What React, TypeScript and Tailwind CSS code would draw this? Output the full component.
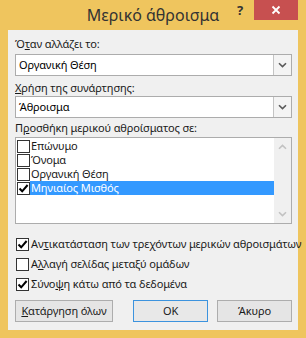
import React from "react";

function Chevron({ up = false, color = "#5a5a5a" }: { up?: boolean; color?: string }) {
  return (
    <svg width="9" height="6" viewBox="0 0 9 6" className={up ? "rotate-180" : ""}>
      <path d="M1 1.2 L4.5 4.6 L8 1.2" fill="none" stroke={color} strokeWidth="1.6" />
    </svg>
  );
}

function Check({ checked }: { checked: boolean }) {
  return (
    <div className="w-[13px] h-[13px] border border-[#333] bg-white flex items-center justify-center shrink-0">
      {checked && (
        <svg width="11" height="11" viewBox="0 0 11 11">
          <path d="M1.5 5.5 L4.2 8.3 L9.6 2" fill="none" stroke="#000" strokeWidth="2" />
        </svg>
      )}
    </div>
  );
}

function Combo({ value }: { value: string }) {
  return (
    <div className="h-[22px] w-[277px] border border-[#acacac] bg-white flex items-stretch">
      <div className="flex-1 flex items-center pl-[3px] text-black">{value}</div>
      <div className="w-[18px] border-l border-[#c4c4c4] bg-[#f4f4f4] flex items-center justify-center">
        <Chevron />
      </div>
    </div>
  );
}

const fields = ["Επώνυμο", "Όνομα", "Οργανική Θέση", "Μηνιαίος Μισθός"];

export default function App() {
  return (
    <div className="w-[306px] h-[338px] bg-[#efc55e] font-['Noto_Sans',sans-serif] text-black select-none whitespace-nowrap">
      {/* title bar */}
      <div className="relative h-[30px]">
        <div className="absolute inset-x-0 top-[4px] text-center text-[16px] leading-[22px] text-[#333]">
          Μερικό άθροισμα
        </div>
        <div className="absolute left-[237px] top-[1px] text-[13px] font-bold leading-[18px] text-[#333]">?</div>
        <div className="absolute left-[254px] top-0 w-[44px] h-[20px] bg-[#c75050] flex items-center justify-center">
          <svg width="10" height="10" viewBox="0 0 10 10">
            <path d="M1.5 1.5 L8.5 8.5 M8.5 1.5 L1.5 8.5" stroke="#fff" strokeWidth="1.8" />
          </svg>
        </div>
      </div>

      {/* client area */}
      <div className="ml-[8px] w-[290px] h-[300px] bg-[#f0f0f0] pl-[7px] pt-[6px] text-[11px] tracking-[-0.12px] text-[#1a1a1a]">
        <div className="leading-[15px]">
          Ό<span className="underline">τ</span>αν αλλάζει το:
        </div>
        <div className="mt-[3px]">
          <Combo value="Οργανική Θέση" />
        </div>
        <div className="mt-[4px] leading-[15px]">
          <span className="underline">Χ</span>ρήση της συνάρτησης:
        </div>
        <div className="mt-[1px]">
          <Combo value="Άθροισμα" />
        </div>
        <div className="mt-[2px] leading-[15px]">
          Π<span className="underline">ρ</span>οσθήκη μερικού αθροίσματος σε:
        </div>

        {/* list box */}
        <div className="mt-[2px] w-[277px] h-[87px] border border-[#acacac] bg-white flex">
          <div className="flex-1 pt-[1px] pl-[1px]">
            {fields.map((f, i) => {
              const sel = i === 3;
              return (
                <div key={f} className="h-[14px] flex items-center">
                  <Check checked={sel} />
                  <div
                    className={
                      "flex-1 h-[14px] pl-[1px] leading-[14px] " +
                      (sel ? "bg-[#3399ff] text-white" : "")
                    }
                  >
                    {f}
                  </div>
                </div>
              );
            })}
          </div>
          <div className="w-[17px] bg-[#f0f0f0] flex flex-col items-center justify-between py-[6px]">
            <Chevron up color="#c2c2c2" />
            <Chevron color="#c2c2c2" />
          </div>
        </div>

        {/* options */}
        <div className="mt-[10px] flex flex-col">
          <div className="h-[20px] flex items-center gap-[2px] pl-[1px]">
            <Check checked />
            <span>
              Αν<span className="underline">τ</span>ικατάσταση των τρεχόντων μερικών αθροισμάτων
            </span>
          </div>
          <div className="h-[20px] flex items-center gap-[2px] pl-[1px]">
            <Check checked={false} />
            <span>
              Α<span className="underline">λ</span>λαγή σελίδας μεταξύ ομάδων
            </span>
          </div>
          <div className="h-[20px] flex items-center gap-[2px] pl-[1px]">
            <Check checked />
            <span>
              Σύνο<span className="underline">ψ</span>η κάτω από τα δεδομένα
            </span>
          </div>
        </div>

        {/* buttons */}
        <div className="mt-[6px] flex w-[277px]">
          <button className="w-[98px] h-[22px] border border-[#adadad] bg-[#e5e5e5] leading-[20px]">
            <span className="underline">Κ</span>ατάργηση όλων
          </button>
          <button className="ml-[20px] w-[75px] h-[22px] border border-[#3c93de] bg-[#e8e8e8] leading-[20px]">
            OK
          </button>
          <button className="ml-[9px] w-[75px] h-[22px] border border-[#adadad] bg-[#e5e5e5] leading-[20px]">
            Άκυρο
          </button>
        </div>
      </div>
    </div>
  );
}
